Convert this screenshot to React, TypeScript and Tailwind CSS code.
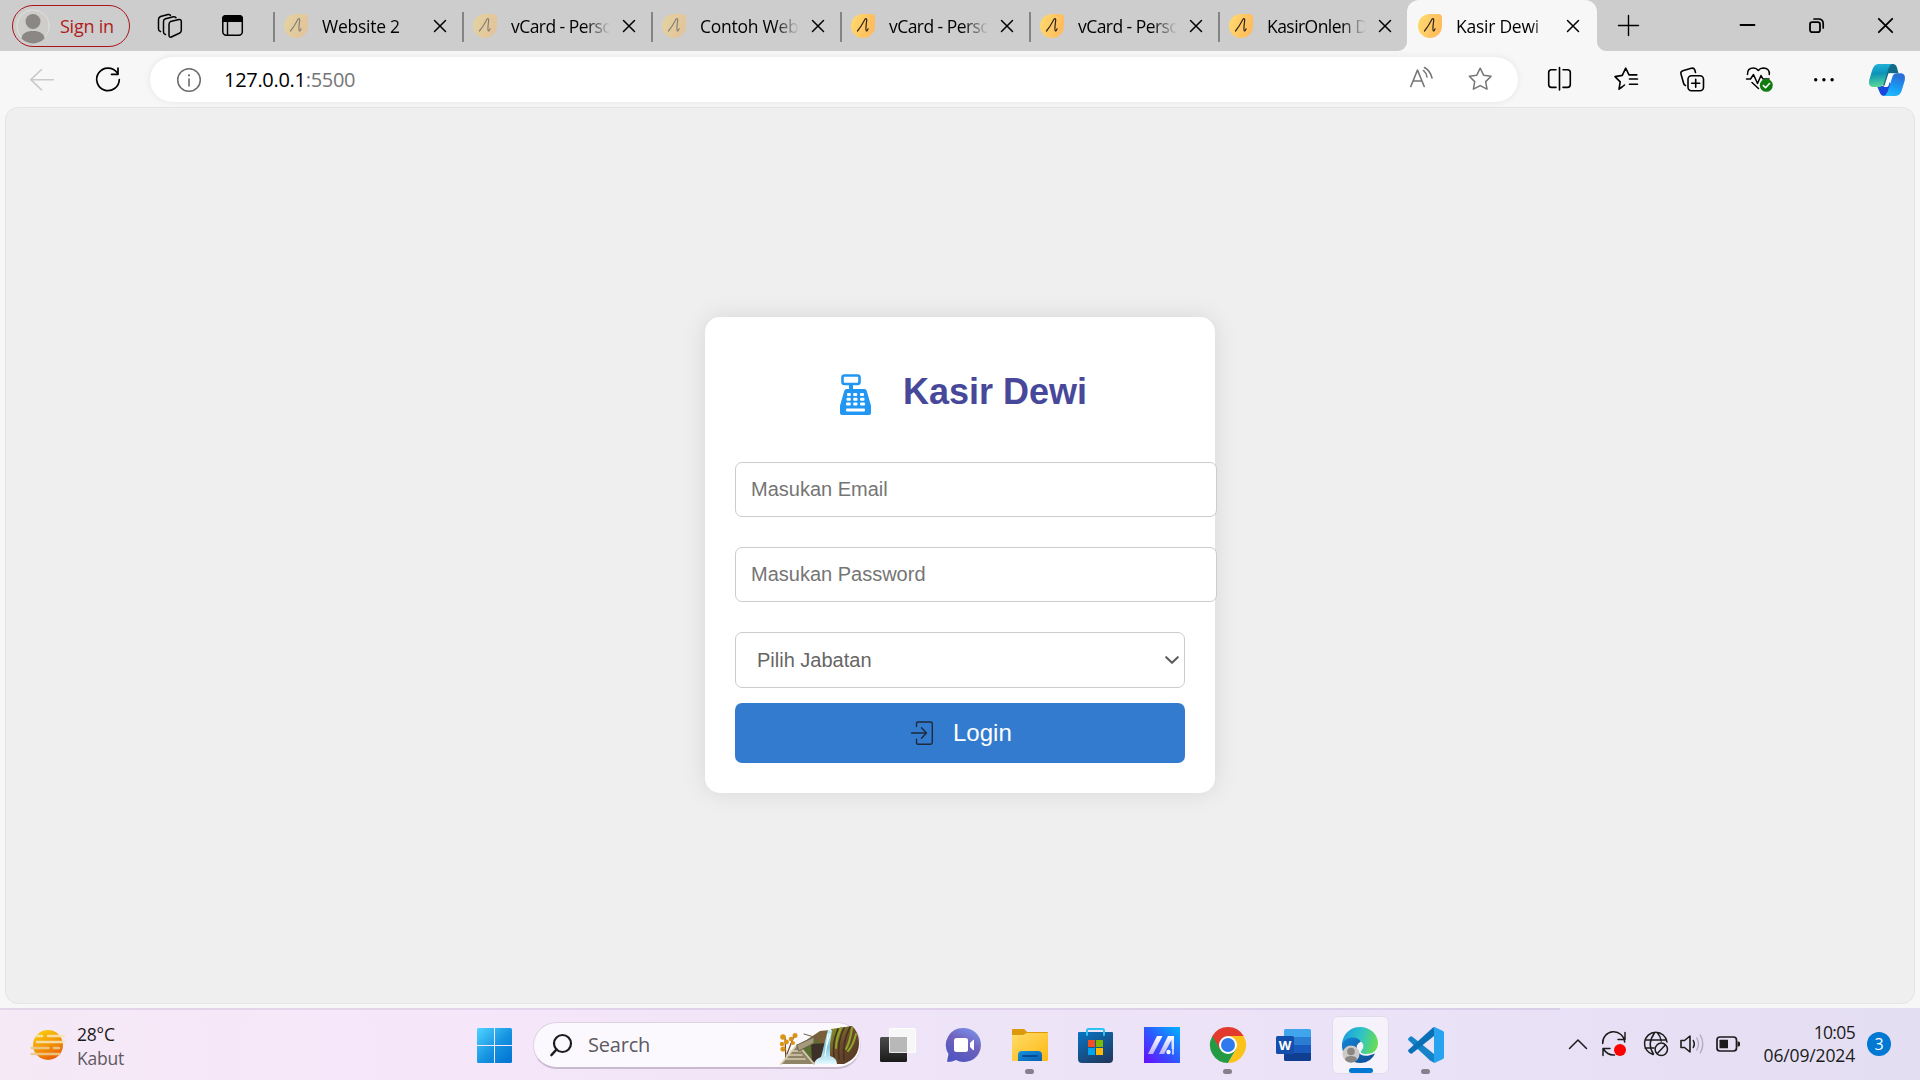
import React from "react";

type IcProps = { box: string; className?: string; children: React.ReactNode };

/* Icon whose box is "x y width height"; it is drawn at one unit per pixel. */
function Ic({ box, className = "", children }: IcProps) {
  const [, , w, h] = box.split(" ").map(Number);
  return (
    <svg
      width={w}
      height={h}
      viewBox={box}
      fill="none"
      strokeLinecap="round"
      strokeLinejoin="round"
      className={"block shrink-0 overflow-visible " + className}
    >
      {children}
    </svg>
  );
}

function Favicon({ faded }: { faded?: boolean }) {
  return (
    <Ic box="0 0 24 24" className={faded ? "opacity-45" : ""}>
      <defs>
        <linearGradient id="fav" x1="0" y1="0" x2="1" y2="0.3">
          <stop offset="0" stopColor="#ffdb6e" />
          <stop offset="1" stopColor="#ffbc5e" />
        </linearGradient>
      </defs>
      <path d="M12 0h8.500q3.500 0 3.500 3.500V12A12 12 0 0 1 12 24 12 12 0 0 1 0 12C0 5 5 0 12 0Z" fill="url(#fav)" />
      <path d="M6.500 17C9 14 12 9 14 5.200c1-1.200 1.800-.6 1.700 1-.3 4-1.500 8.500-.4 10.600.7.6 1.300-.8 1.800-2" stroke="#2b2418" strokeWidth="1.2" />
    </Ic>
  );
}

function Close() {
  return (
    <Ic box="0 0 12 12">
      <path d="M.5.500l11 11M11.500.500l-11 11" stroke="#000" strokeWidth="1.5" />
    </Ic>
  );
}

type TabProps = { title: string; faded?: boolean; active?: boolean; tight?: boolean };

function Tab({ title, faded, active, tight }: TabProps) {
  return (
    <div
      className={
        active
          ? "relative flex h-full w-[190px] shrink-0 items-center rounded-t-[12px] bg-[#f7f7f7]"
          : "relative flex h-full w-[189px] shrink-0 items-center"
      }
    >
      <div className={active ? "h-[30px] w-[2px]" : "mt-[2px] h-[30px] w-[2px] bg-[#848484]"} />
      <div className="mt-px ml-[9px]">
        <Favicon faded={faded} />
      </div>
      <div
        className={
          "ml-[14px] w-[99px] text-[17.5px] leading-[26px] whitespace-nowrap text-black [mask-image:linear-gradient(to_right,#000_74px,transparent_99px)] " +
          (tight ? "tracking-[-0.55px]" : "tracking-[-0.25px]")
        }
      >
        {title}
      </div>
      <div className={active ? "mt-px ml-[12px]" : "mt-px ml-[13px]"}>
        <Close />
      </div>
      {active && (
        <>
          <svg className="absolute bottom-0 -left-[9px]" width="9" height="9" viewBox="0 0 9 9">
            <path d="M9 0v9H0A9 9 0 0 0 9 0Z" fill="#f7f7f7" />
          </svg>
          <svg className="absolute -right-[9px] bottom-0" width="9" height="9" viewBox="0 0 9 9">
            <path d="M0 0v9h9A9 9 0 0 1 0 0Z" fill="#f7f7f7" />
          </svg>
        </>
      )}
    </div>
  );
}

function TabBar() {
  return (
    <header className="flex h-[51px] shrink-0 items-center bg-[#cdcdcd]">
      <div className="ml-[12px] flex h-[42px] w-[118px] shrink-0 items-center rounded-full border-[1.5px] border-[#a91519]">
        <Ic box="16 9 34 34" className="ml-[3px]">
          <circle cx="33" cy="26" r="16.2" fill="#cfcdca" stroke="#e2e0dc" />
          <circle cx="33" cy="21.500" r="7.500" fill="#8b8784" />
          <path d="M21.500 38.500C22 33.500 26 31 33 31s11 2.500 11.500 7.500a16 16 0 0 1-23 0Z" fill="#8b8784" />
        </Ic>
        <span className="ml-[10px] text-[18px] leading-[26px] tracking-[-0.25px] whitespace-nowrap text-[#b01b20]">Sign in</span>
      </div>
      <Ic box="157 13 25 24" className="ml-[27px]">
        <g stroke="#000" strokeWidth="1.5">
          <path d="M170.500 20.500l8.500-2q2-.3 2.300 1.500v9.500q0 1.700-1.500 2.500l-8.500 4q-2 .6-2.300-1.500v-11q0-2 1.500-3Z" />
          <path d="M165.500 33.500q-2-.5-2-2.500V20.500q0-2 2-2.700l8-2q2-.3 2.500 1" />
          <path d="M160.500 30.500q-2-.5-2-2.500v-9.500q0-2 2-3l7.500-2q2-.2 2.500 1" />
        </g>
      </Ic>
      <Ic box="222 15 21 21" className="ml-[40px]">
        <rect x="222.800" y="15.800" width="19.500" height="19.500" rx="3.500" stroke="#000" strokeWidth="1.5" />
        <path d="M222 22v-3.500q0-3.500 3.500-3.500h14q3.500 0 3.500 3.500V22Z" fill="#000" />
        <path d="M227.500 21v14" stroke="#000" strokeWidth="1.4" />
      </Ic>
      <div className="ml-[30px] flex h-full">
        <Tab title="Website 2" faded />
        <Tab title="vCard - Perso" faded tight />
        <Tab title="Contoh Web" faded />
        <Tab title="vCard - Perso" tight />
        <Tab title="vCard - Perso" tight />
        <Tab title="KasirOnlen D" tight />
        <Tab title="Kasir Dewi" active />
      </div>
      <Ic box="0 0 21 21" className="ml-[21px]">
        <path d="M10.500.500v20M.5 10.500h20" stroke="#000" strokeWidth="1.4" />
      </Ic>
      <Ic box="0 0 15 15" className="ml-[101px]">
        <path d="M.5 7h14" stroke="#000" strokeWidth="1.800" />
      </Ic>
      <Ic box="0 0 15 15" className="ml-[54px]">
        <rect x="1" y="4.200" width="10" height="10" rx="2.200" stroke="#000" strokeWidth="1.800" />
        <path d="M5 1h4.500q4.700 0 4.700 4.700V10" stroke="#000" strokeWidth="1.700" />
      </Ic>
      <Ic box="0 0 15 15" className="ml-[54px]">
        <path d="M.8.800l13.400 13.400M14.200.800L.8 14.200" stroke="#000" strokeWidth="1.800" />
      </Ic>
    </header>
  );
}

const STAR = "M12.200 1.200l3.400 7 7.500 1.100-5.400 5.300 1.300 7.600-6.800-3.600-6.800 3.600 1.300-7.600-5.400-5.300 7.500-1.100Z";

function Toolbar() {
  return (
    <div className="flex h-[56px] shrink-0 items-center bg-[#f7f7f7]">
      <Ic box="30 68 24 21" className="ml-[30px]">
        <path d="M30.800 78.700h22.500M41.500 68.500L30.800 78.700l10.700 10.200" stroke="#cacaca" strokeWidth="1.600" />
      </Ic>
      <Ic box="96 68 24 23" className="ml-[42px]">
        <path d="M117 72.500A11.300 11.300 0 1 0 119.300 79.500M118 68v6.300h-6.500" stroke="#000" strokeWidth="1.700" />
      </Ic>
      <div className="mt-px ml-[30px] flex h-[45px] w-[1368px] shrink-0 items-center rounded-full bg-white shadow-[0_0_7px_rgba(0,0,0,0.08)]">
        <Ic box="177 67 24 24" className="ml-[27px]">
          <circle cx="189" cy="79" r="11.300" stroke="#6b6b6b" strokeWidth="1.500" />
          <path d="M189 78v7" stroke="#6b6b6b" strokeWidth="1.600" />
          <circle cx="189" cy="74.300" r="1.100" fill="#6b6b6b" />
        </Ic>
        <div className="ml-[23px] w-[300px] text-[20px] leading-[28px] tracking-[-0.3px] whitespace-nowrap text-black">
          127.0.0.1<span className="text-[#767676]">:5500</span>
        </div>
        <Ic box="1410 68 24 24" className="-mt-px ml-auto">
          <g stroke="#767676" strokeWidth="1.600">
            <path d="M1410.800 87.500l6.700-16.500 6.700 16.500M1413 82h9" />
            <path d="M1423.500 71.500q3 2.500 3.500 6.500M1424.500 68.500q6 3.500 7.500 10.500" />
          </g>
        </Ic>
        <Ic box="0 0 24 24" className="-mt-px mr-[26px] ml-[34px]">
          <path d={STAR} stroke="#767676" strokeWidth="1.500" />
        </Ic>
      </div>
      <Ic box="1548 68 23 24" className="ml-[30px]">
        <path d="M1556 70.800h-4.500q-2.800 0-2.800 2.800v12q0 2.800 2.800 2.800h4.500M1563 70.800h4.500q2.800 0 2.800 2.800v12q0 2.800-2.800 2.800h-4.500M1559.500 68.500v22.500" stroke="#000" strokeWidth="1.600" />
      </Ic>
      <Ic box="1614 68 24 24" className="ml-[43px]">
        <path d="M1622 88l-3 2.200 1.200-7.300-5.200-5.300 7.300-1.200 3.400-7.200 3.300 6.700h7.800M1629.500 80h8M1629.500 85.200h8M1624.500 86l-2.500 2" stroke="#000" strokeWidth="1.600" />
      </Ic>
      <Ic box="1680 67 24 24" className="ml-[42px]">
        <g stroke="#000" strokeWidth="1.600">
          <rect x="1688" y="75.800" width="15.500" height="15" rx="3.500" />
          <path d="M1695.700 79.300v8M1691.700 83.300h8M1685.500 85.500q-1.500-.5-2-2.500l-2.500-9q-.6-2.500 1.800-3.300l8.500-2.500q2.700-.6 3.500 1.800l.7 2.500" />
        </g>
      </Ic>
      <Ic box="1746 68 27 25" className="mt-px ml-[42px]">
        <g stroke="#000" strokeWidth="1.500">
          <path d="M1747.500 75.500q-.3-6.500 6-6.500 3 0 4.800 2.500 1.800-2.500 5-2.500 6.500.3 6 6.500M1752 83.500l6.500 6" />
          <path d="M1746.500 80h4l3-4.500 4 9 3.500-8 2 3.500h6" />
        </g>
        <circle cx="1766.300" cy="86.300" r="6.500" fill="#107c10" />
        <path d="M1763.300 86.500l2.200 2.200 4-4.200" stroke="#fff" strokeWidth="1.600" />
      </Ic>
      <Ic box="1814 68 20 24" className="mt-[2px] ml-[41px]">
        <g fill="#000">
          <circle cx="1815.700" cy="79.700" r="1.700" />
          <circle cx="1823.900" cy="79.700" r="1.700" />
          <circle cx="1832.100" cy="79.700" r="1.700" />
        </g>
      </Ic>
      <Ic box="1869 64 36 32" className="mt-[2px] ml-[35px]">
        <defs>
          <linearGradient id="cp1" x1="0" y1="0" x2="0.1" y2="1">
            <stop offset="0" stopColor="#22b5de" />
            <stop offset="0.45" stopColor="#0c93b8" />
            <stop offset="1" stopColor="#58d69a" />
          </linearGradient>
          <linearGradient id="cp2" x1="0.300" y1="0" x2="0" y2="1">
            <stop offset="0" stopColor="#2b6fd8" />
            <stop offset="0.600" stopColor="#16a4f8" />
            <stop offset="1" stopColor="#2bc1fb" />
          </linearGradient>
        </defs>
        <path d="M1886 64h7.500q2.500.3 3.300 3l1.700 6.300h-6q-2.500 0-3.500 2l-4 11.500-7-6Z" fill="#116a87" />
        <path d="M1877 86h7l5.500-4 3 5-3 6q-1.500 3-5 3-3.500 0-4.500-3Z" fill="#1b48dc" />
        <path d="M1878 64h14q-2.500 1-3.700 5l-4.300 14q-1 3.700-5 4h-6.500q-4.500-.8-3.300-7l3-10q2-6 5.800-6Z" fill="url(#cp1)" />
        <path d="M1896.500 73.300h5q4.500.8 3.300 7l-3 10q-2 5.700-6 5.700h-12.500q3-.8 4.200-4l4.500-14q1.200-4.400 4.500-4.700Z" fill="url(#cp2)" />
        <path d="M1888.500 73.300h4l-4 12.500q-.6 1.200-2 1.200h-3q1-1 1.500-3Z" fill="#fff" />
      </Ic>
    </div>
  );
}

function RegisterIcon() {
  return (
    <Ic box="840 374 31 41" className="ml-[105px]">
      <rect x="842.500" y="375.500" width="17" height="8.500" rx="2" stroke="#2196f3" strokeWidth="2.600" />
      <path d="M849 384h4v5h11.500q1.700 0 2.200 1.700l4.300 15v7.300q0 2-2 2h-27q-2 0-2-2v-7.300l4.300-15q.5-1.700 2.200-1.700h2.500Z" fill="#2196f3" />
      <g fill="#fff">
        <rect x="847" y="393" width="3.800" height="3" rx="1" />
        <rect x="853.200" y="393" width="4" height="3" rx="1" />
        <rect x="860" y="393" width="4" height="3" rx="1" />
        <rect x="846.500" y="397.800" width="4.300" height="3" rx="1" />
        <rect x="853.200" y="397.800" width="4.300" height="3" rx="1" />
        <rect x="860" y="397.800" width="4.500" height="3" rx="1" />
        <rect x="846" y="402.500" width="4.800" height="3" rx="1" />
        <rect x="853.200" y="402.500" width="4.300" height="3" rx="1" />
        <rect x="860" y="402.500" width="5" height="3" rx="1" />
        <rect x="846" y="408.500" width="19" height="3" rx="1" />
      </g>
    </Ic>
  );
}

function LoginCard() {
  return (
    <div className="-mt-[2px] h-[476px] w-[510px] rounded-[15px] bg-white px-[30px] font-['Liberation_Sans',sans-serif] shadow-[0_0_25px_rgba(0,0,0,0.1)]">
      <div className="flex h-[145px] items-center">
        <div className="pt-[10px]">
          <RegisterIcon />
        </div>
        <h1 className="ml-[32px] pt-[5px] text-[36px] leading-[42px] font-bold whitespace-nowrap text-[#48489a]">Kasir Dewi</h1>
      </div>
      <div className="flex h-[55px] w-[482px] items-center rounded-[7px] border border-[#ccc] bg-white pl-[15px] text-[20px] leading-[24px] text-[#757575]">
        Masukan Email
      </div>
      <div className="mt-[30px] flex h-[55px] w-[482px] items-center rounded-[7px] border border-[#ccc] bg-white pl-[15px] text-[20px] leading-[24px] text-[#757575]">
        Masukan Password
      </div>
      <div className="mt-[30px] flex h-[56px] w-[450px] items-center justify-between rounded-[7px] border border-[#ccc] bg-white pr-[5px] pl-[21px] text-[20px] leading-[24px] text-[#666]">
        Pilih Jabatan
        <Ic box="0 0 14 8">
          <path d="M1.200 1.200L7 6.800l5.800-5.600" stroke="#5c5c5c" strokeWidth="2.100" />
        </Ic>
      </div>
      <button className="mt-[15px] flex h-[60px] w-[450px] items-center rounded-[7px] bg-[#337bce] text-[24px] leading-[28px] text-white">
        <Ic box="911 721 22 24" className="ml-[176px]">
          <path d="M916.500 726.500v-3q0-1.500 1.500-1.500h12.500q1.800 0 1.800 1.500v19q0 1.700-1.800 1.700H918q-1.500 0-1.500-1.500v-3.500" stroke="#1f2a3a" strokeWidth="1.400" />
          <path d="M911.500 733h15M921.500 727.800l5 5.200-5 5.200" stroke="#1f2a3a" strokeWidth="1.400" />
        </Ic>
        <span className="ml-[20px]">Login</span>
      </button>
    </div>
  );
}

function TaskItem({ children, mark }: { children: React.ReactNode; mark?: boolean }) {
  return (
    <div className="relative flex h-[72px] w-[66px] shrink-0 items-center justify-center">
      {children}
      {mark && <div className="absolute bottom-[7px] left-[28px] h-[5px] w-[9px] rounded-full bg-[#85808b]" />}
    </div>
  );
}

function SearchArt() {
  return (
    <Ic box="779 1028 81 38" className="ml-auto">
      <defs>
        <linearGradient id="rock" x1="0" y1="0" x2="1" y2="1">
          <stop offset="0" stopColor="#8aa52c" />
          <stop offset="0.450" stopColor="#6d4b2c" />
          <stop offset="1" stopColor="#4e3423" />
        </linearGradient>
        <linearGradient id="fall" x1="0" y1="0" x2="0" y2="1">
          <stop offset="0" stopColor="#c8f0fb" />
          <stop offset="0.500" stopColor="#7fc5dc" />
          <stop offset="1" stopColor="#e5f9ff" />
        </linearGradient>
      </defs>
      <path d="M808 1041l12-8 10-1 4 34h-42Z" fill="#78603a" />
      <path d="M803 1044l9-5 8 6v15l-10 5-10-8Z" fill="#5a7030" />
      <path d="M811 1046l16-1 3 19h-18Z" fill="#3d3027" />
      <path d="M831 1031l21-3q7 6 7 17 0 15-15 21h-8l-8-8Z" fill="url(#rock)" />
      <path d="M838 1031q-6 14-4 28M844 1030q-7 14-5 31M850 1029q-8 15-6 33" stroke="#473222" strokeWidth="1.600" />
      <path d="M841 1030q-5 11-5 20M852 1030q-2 14-6 21M856 1036q-3 12-8 17" stroke="#8fa52c" strokeWidth="2" />
      <path d="M828 1032h4l-2 14v12q7 2 7 8h-23q1-5 7-7 2-7 3-12Z" fill="url(#fall)" />
      <path d="M828 1036l-3 22M830 1036l-4 14" stroke="#fff" strokeWidth="1" />
      <path d="M786 1065l-1-26M787 1056l7-18" stroke="#6a4321" strokeWidth="1.200" />
      <g fill="#dd9415">
        <circle cx="783" cy="1039" r="2.800" />
        <circle cx="786.500" cy="1044" r="2.400" />
        <circle cx="782" cy="1046" r="2.200" />
        <circle cx="783" cy="1051" r="2.600" />
        <circle cx="791" cy="1041" r="2.300" />
        <circle cx="795" cy="1037.500" r="2.500" />
        <circle cx="793" cy="1045" r="2" />
      </g>
      <path d="M781 1066l16-19 4 1 14 18Z" fill="#8f8468" />
      <path d="M797 1047l-16 19M799 1048l15 18M791 1053h9M788 1057h14M785 1061h20" stroke="#d7ccac" strokeWidth="1.700" />
      <path d="M797 1047l17-8v6l-15 8ZM804 1036l10 3" fill="#a59a7b" stroke="#6b6148" strokeWidth="1" />
    </Ic>
  );
}

function Taskbar() {
  return (
    <footer className="relative flex h-[72px] shrink-0 items-center bg-[linear-gradient(90deg,#f5e9f6_0%,#f7e7fa_18%,#f3e5f8_35%,#eee4f8_50%,#eae2f7_75%,#e4def3_100%)] text-[#1b1b1b]">
      <div className="absolute top-0 left-0 h-[2px] w-[1560px] bg-[#6e4b82]/12" />
      <div className="flex w-full items-center">
        <Ic box="30 1030 35 30" className="mt-[2px] ml-[30px]">
          <defs>
            <linearGradient id="sun" x1="0.200" y1="0" x2="0.700" y2="1">
              <stop offset="0" stopColor="#fccf08" />
              <stop offset="1" stopColor="#e85d06" />
            </linearGradient>
          </defs>
          <circle cx="48" cy="1045" r="15" fill="url(#sun)" />
          <g stroke="#f7e4b4" strokeWidth="2.500" opacity="0.900">
            <path d="M36 1036h6M48 1036h16M37 1042h27" />
            <path d="M31.500 1048h17M54 1048h5M31.500 1054h28" stroke="#ecc98a" />
          </g>
        </Ic>
        <div className="mt-[3px] ml-[12px] w-[400px] text-[17.5px] leading-[24px] tracking-[-0.2px]">
          <div>28°C</div>
          <div className="text-[#5f5a62]">Kabut</div>
        </div>
        <Ic box="0 0 35 35" className="mt-[2px] mr-[21px]">
          <defs>
            <linearGradient id="win" gradientUnits="userSpaceOnUse" x1="0" y1="0" x2="35" y2="35">
              <stop offset="0" stopColor="#4fd4ff" />
              <stop offset="0.550" stopColor="#1592e0" />
              <stop offset="1" stopColor="#0072d0" />
            </linearGradient>
          </defs>
          <path d="M1.500 0H17v17H0V1.500Q0 0 1.500 0ZM18 0h15.500Q35 0 35 1.500V17H18ZM0 18h17v17H1.500Q0 35 0 33.500ZM18 18h17v15.500q0 1.500-1.500 1.500H18Z" fill="url(#win)" />
        </Ic>
        <div className="mt-[2px] flex h-[47px] w-[328px] shrink-0 items-center rounded-full border-[1.5px] border-b-2 border-[#dfd2e5] border-b-[#c8bacf] bg-[#fcf9fe]">
          <Ic box="550 1034 22 22" className="ml-[16px]">
            <circle cx="562.500" cy="1043.500" r="8.500" stroke="#1c1c1c" strokeWidth="2.200" />
            <path d="M556.500 1049.500l-5 5.500" stroke="#1c1c1c" strokeWidth="2.600" />
          </Ic>
          <span className="ml-[16px] text-[20px] leading-[28px] tracking-[-0.2px] text-[#5d5a60]">Search</span>
          <SearchArt />
        </div>
        <div className="mt-[2px] ml-[4px] flex">
          <TaskItem>
            <Ic box="0 0 36 34">
              <defs>
                <linearGradient id="tv" x1="0" y1="0" x2="0" y2="1">
                  <stop offset="0" stopColor="#4b4b4b" />
                  <stop offset="1" stopColor="#1a1a1a" />
                </linearGradient>
              </defs>
              <rect x="0" y="9" width="27" height="25" rx="1.500" fill="url(#tv)" />
              <rect x="9" y="0" width="27" height="25" rx="1.500" fill="#f7f7f8" />
              <path d="M9 9h18v16H10.500Q9 25 9 23.500Z" fill="#b8b8b8" />
              <rect x="9.500" y="0.500" width="26" height="24" rx="1" stroke="#fff" strokeOpacity="0.700" />
            </Ic>
          </TaskItem>
          <TaskItem>
            <Ic box="0 0 34 34">
              <defs>
                <linearGradient id="chat" x1="0.300" y1="1" x2="0.800" y2="0">
                  <stop offset="0" stopColor="#5055c0" />
                  <stop offset="0.550" stopColor="#6f62bd" />
                  <stop offset="1" stopColor="#7b93ec" />
                </linearGradient>
              </defs>
              <path d="M17 0a17 17 0 1 1-8 32q-4 2-8 2-1 0-.8-1.500L1.500 26A17 17 0 0 1 17 0Z" fill="url(#chat)" />
              <rect x="7" y="10" width="14" height="14" rx="2.500" fill="#fff" />
              <path d="M23 15l3-3q1-.6 1 .8v8.500q0 1.300-1 .7l-3-3Z" fill="#fff" />
            </Ic>
          </TaskItem>
          <TaskItem mark>
            <Ic box="0 0 36 32">
              <defs>
                <linearGradient id="fold" x1="0" y1="0" x2="1" y2="1">
                  <stop offset="0" stopColor="#ffdc68" />
                  <stop offset="1" stopColor="#fdb813" />
                </linearGradient>
                <linearGradient id="pocket" x1="0" y1="0" x2="1" y2="1">
                  <stop offset="0" stopColor="#1493dd" />
                  <stop offset="1" stopColor="#0a5fb4" />
                </linearGradient>
              </defs>
              <path d="M0 1q0-1 1-1h10q1.500 0 2.500 1.200L15 3h20q1 0 1 1v5H0Z" fill="#dc9a0a" />
              <path d="M0 6h10q2 0 3-1l1.500-1H36v27q0 1-1 1H1q-1 0-1-1Z" fill="url(#fold)" />
              <path d="M6 32v-6q0-4 4-4h16q4 0 4 4v6Z" fill="url(#pocket)" />
              <path d="M11 27h14" stroke="#084b94" strokeWidth="1.800" />
            </Ic>
          </TaskItem>
          <TaskItem>
            <Ic box="0 0 35 35" className="mr-px">
              <defs>
                <linearGradient id="store" x1="0.200" y1="0" x2="0.800" y2="1">
                  <stop offset="0" stopColor="#0870bc" />
                  <stop offset="1" stopColor="#20395f" />
                </linearGradient>
              </defs>
              <path d="M1 4h33q1 0 1 1v26q0 4-4 4H4q-4 0-4-4V5q0-1 1-1Z" fill="url(#store)" />
              <path d="M9 7V2.500Q9 1 10.500 1h14Q26 1 26 2.500V7" stroke="#2cc3f2" strokeWidth="2" />
              <path d="M10 12h7v7h-7Z" fill="#f25022" />
              <path d="M18 12h7v7h-7Z" fill="#7fba00" />
              <path d="M10 20h7v7h-7Z" fill="#00a4ef" />
              <path d="M18 20h7v7h-7Z" fill="#ffb900" />
            </Ic>
          </TaskItem>
          <TaskItem>
            <Ic box="0 0 36 36">
              <defs>
                <linearGradient id="asus" x1="0" y1="1" x2="1" y2="0">
                  <stop offset="0" stopColor="#6a0cff" />
                  <stop offset="0.500" stopColor="#2e59ff" />
                  <stop offset="1" stopColor="#00b4ff" />
                </linearGradient>
                <linearGradient id="asusw" x1="0" y1="0" x2="0" y2="1">
                  <stop offset="0" stopColor="#fff" />
                  <stop offset="1" stopColor="#b9b0f5" />
                </linearGradient>
              </defs>
              <path d="M0 0h36v36H0Z" fill="url(#asus)" />
              <path d="M13 9h5.500L9 27H4Z" fill="url(#asusw)" />
              <path d="M24 9h6v13h-2.500V13L20 27h-5Z" fill="url(#asusw)" />
              <circle cx="24.500" cy="25" r="2.200" fill="#fff" />
              <path d="M29 13v14" stroke="#e6e5ff" strokeWidth="1.600" />
            </Ic>
          </TaskItem>
          <TaskItem mark>
            <Ic box="0 0 36 36">
              <path d="M2.400 9a18 18 0 0 0 15.600 27l8-13.500Z" fill="#259a45" />
              <path d="M33.600 9H18l8 13.500L18 36A18 18 0 0 0 33.600 9Z" fill="#fdc21a" />
              <path d="M2.400 9L10 22l8-13h15.600A18 18 0 0 0 2.400 9Z" fill="#e23b2e" />
              <circle cx="18" cy="18" r="9" fill="#fff" />
              <circle cx="18" cy="18" r="7" fill="#2f7bed" />
            </Ic>
          </TaskItem>
          <TaskItem>
            <div className="relative">
              <Ic box="0 0 36 32">
                <path d="M8 8V1.500Q8 0 9.500 0h24Q35 0 35 1.500V8Z" fill="#41a5ee" />
                <path d="M8 8h27v8H8Z" fill="#2b7cd3" />
                <path d="M8 16h27v8H8Z" fill="#185abd" />
                <path d="M8 24h27v6.500q0 1.500-1.500 1.500h-24Q8 32 8 30.500Z" fill="#103f91" />
                <rect x="0" y="7" width="18" height="18" rx="1.500" fill="#154fae" />
              </Ic>
              <span className="absolute top-[7px] left-0 w-[18px] text-center text-[13px] leading-[18px] font-bold text-white">W</span>
            </div>
          </TaskItem>
          <TaskItem>
            <div className="relative flex h-[58px] w-[57px] items-center justify-center rounded-[6px] border border-[#e2dbec] bg-[#f6f2fb]">
              <Ic box="0 0 36 36">
                <defs>
                  <linearGradient id="ed1" x1="0" y1="0.300" x2="1" y2="0.500">
                    <stop offset="0" stopColor="#1c9bdc" />
                    <stop offset="0.500" stopColor="#2ec3c8" />
                    <stop offset="1" stopColor="#68dc52" />
                  </linearGradient>
                  <linearGradient id="ed2" x1="0" y1="0" x2="1" y2="1">
                    <stop offset="0" stopColor="#1387d8" />
                    <stop offset="1" stopColor="#0f4a93" />
                  </linearGradient>
                </defs>
                <path d="M0 17Q1 9 9 8.500q8 0 10 6-6 3-4 8.500 3 7 12 5.500l6-2q-4 9-14 9.500Q2 35.500 0 20Z" fill="url(#ed2)" />
                <path d="M0 17C1 6 9 0 18 0c11 0 18 8 18 16 0 8-6 11-12 11-3 0-6-1-5-3 3-3 3-6 1-8.500C16 9 5 8 0 17Z" fill="url(#ed1)" />
                <circle cx="9" cy="27" r="8.500" fill="#cdc9c6" />
                <circle cx="9" cy="24.500" r="3.800" fill="#8a8683" />
                <path d="M3 33q0-4 6-4t6 4a8 8 0 0 1-12 0Z" fill="#8a8683" />
              </Ic>
              <div className="absolute bottom-0 left-[16px] h-[5px] w-[24px] rounded-full bg-[#0078d4]" />
            </div>
          </TaskItem>
          <TaskItem mark>
            <Ic box="0 0 36 36">
              <path d="M26 9v18L4 9.500q-1-.6-2 .2l-1.500 1.500q-1 1 0 2L22 33.500l4.500 2.500Z" fill="#1583c9" />
              <path d="M26 9L4 26.500q-1 .6-2-.2L.5 24.800q-1-1 0-2L25 .5l1.500-.5Z" fill="#0a70b6" />
              <path d="M26.500 0L35 4q1 .6 1 1.800v24.400q0 1.200-1 1.800l-8.500 4Q25 35.500 26 33V3q-.8-2.200.5-3Z" fill="#27a3f0" />
            </Ic>
          </TaskItem>
        </div>
        <Ic box="1569 1038 18 10" className="ml-[110px]">
          <path d="M1569.500 1047.500l8.500-8.500 8.500 8.500" stroke="#1c1c1c" strokeWidth="1.500" />
        </Ic>
        <Ic box="1602 1032 24 24" className="ml-[15px]">
          <path d="M1602.700 1043.500a11 11 0 0 1 22-1.500M1625 1032.500v7h-7M1603 1055.500v-7h7M1603.500 1049q4 6.500 11 6" stroke="#1c1c1c" strokeWidth="1.500" />
          <circle cx="1620" cy="1050" r="6" fill="#fd0000" />
        </Ic>
        <Ic box="1644 1032 24 24" className="ml-[18px]">
          <g stroke="#1c1c1c" strokeWidth="1.500">
            <path d="M1653 1054.500a11.300 11.300 0 1 1 14-12.500M1645 1040h21.500M1645 1048h9M1653.500 1054q-7-10 1-21M1657.500 1033q3 3 3.700 8" />
            <circle cx="1661.300" cy="1049.300" r="6.200" />
            <path d="M1657.300 1053.500l8-8.500" />
          </g>
        </Ic>
        <Ic box="1680 1034 24 20" className="ml-[12px]">
          <path d="M1681 1040.500h3.500l5.500-4.500v16l-5.500-4.500h-3.500Z" stroke="#1c1c1c" strokeWidth="1.600" />
          <path d="M1693.300 1040.500q2 3.500 0 7" stroke="#1c1c1c" strokeWidth="1.500" />
          <path d="M1696.800 1038q3.400 6 0 12M1700.300 1035q5 9 0 18" stroke="#b5afc0" strokeWidth="1.500" />
        </Ic>
        <Ic box="1716 1036 24 16" className="ml-[12px]">
          <rect x="1717" y="1037" width="19.500" height="14" rx="3" stroke="#1c1c1c" strokeWidth="1.700" />
          <rect x="1719.500" y="1039.800" width="8.500" height="8.500" rx="0.500" fill="#1c1c1c" />
          <path d="M1737.500 1041.500h1q1.500 0 1.500 1.500v2q0 1.500-1.500 1.500h-1Z" fill="#1c1c1c" />
        </Ic>
        <div className="ml-[15px] w-[100px] shrink-0 text-right text-[17.5px] leading-[23px] whitespace-nowrap">
          <div className="tracking-[-0.65px]">10:05</div>
          <div className="tracking-[-0.15px]">06/09/2024</div>
        </div>
        <div className="ml-[12px] flex size-[24px] shrink-0 items-center justify-center rounded-full bg-[#0078d4] text-[16px] leading-[20px] text-white">3</div>
      </div>
    </footer>
  );
}

export default function App() {
  return (
    <div className="flex h-[1080px] w-[1920px] flex-col overflow-hidden bg-[#f7f7f7] font-['Open_Sans','Noto_Sans',sans-serif]">
      <TabBar />
      <Toolbar />
      <main className="mx-[5px] flex h-[897px] shrink-0 items-center justify-center rounded-[13px] border border-[#e4e4e4] bg-[#efefef]">
        <LoginCard />
      </main>
      <div className="h-[4px] shrink-0" />
      <Taskbar />
    </div>
  );
}
